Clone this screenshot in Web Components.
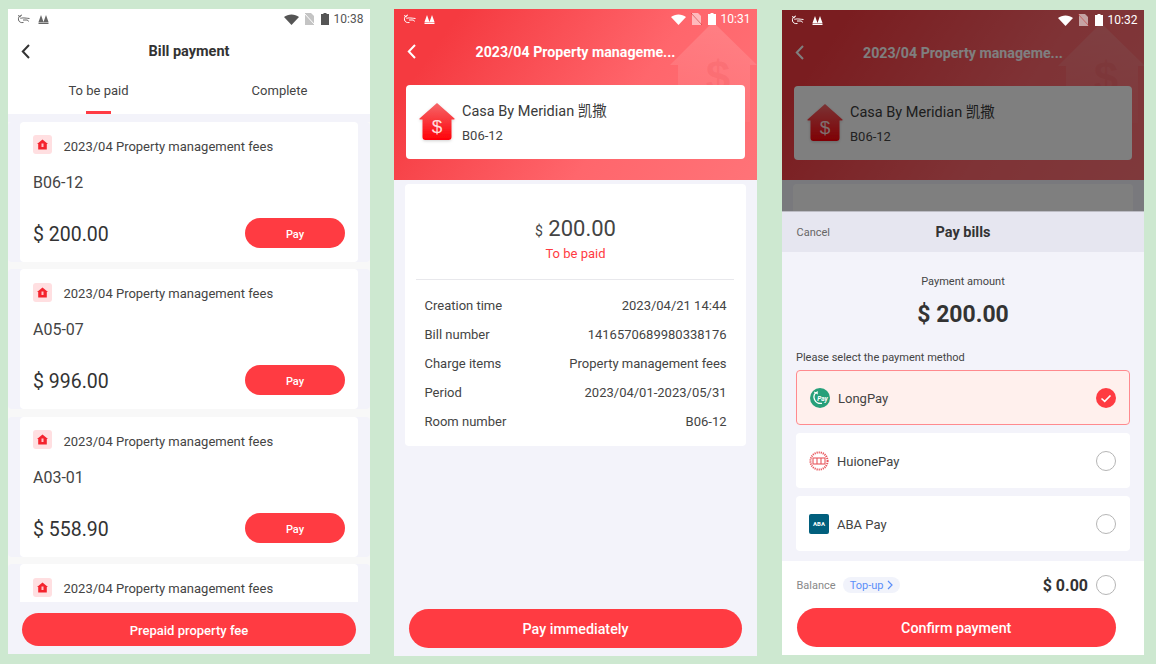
<!DOCTYPE html>
<html lang="en"><head><meta charset="utf-8"><title>Bill payment</title>
<style>
html,body{margin:0;padding:0;background:#cde8d0;height:664px;overflow:hidden}
body{font-family:Roboto,"Noto Sans CJK SC",sans-serif;color:#333}
#screens{display:flex;align-items:flex-start;padding-left:8px}
</style></head><body>
<div id="screens">
<x-phone style="--top:9px;--w:362px;--h:645px;--ml:0px">
  <x-status time="10:38" tone="dark"></x-status>
  <x-nav label="Bill payment"></x-nav>
  <x-tabs></x-tabs>
  <x-bill-list>
    <x-bill room="B06-12" amount="$ 200.00"></x-bill>
    <x-bill room="A05-07" amount="$ 996.00"></x-bill>
    <x-bill room="A03-01" amount="$ 558.90"></x-bill>
    <x-bill></x-bill>
  </x-bill-list>
  <x-action h="33" top="11" side="14" size="13">Prepaid property fee</x-action>
</x-phone>
<x-phone style="--top:9px;--w:363px;--h:647px;--ml:24px">
  <x-hero time="10:31" style="--hh:171px"></x-hero>
  <x-details></x-details>
  <x-action h="39" top="0" side="15" size="14.300">Pay immediately</x-action>
</x-phone>
<x-phone style="--top:10px;--w:362px;--h:645px;--ml:25px">
  <x-hero time="10:32" style="--hh:170px"></x-hero>
  <x-details empty></x-details>
  <x-pay-sheet></x-pay-sheet>
</x-phone>
</div>
<script>
const def=(name,html,init)=>{customElements.define(name,class extends HTMLElement{
  connectedCallback(){ if(this.shadowRoot) return; const s=this.attachShadow({mode:'open'}); s.innerHTML=typeof html==='function'?html(this):html; if(init)init(this,s);} });};

def('x-phone',`<style>:host{display:flex;flex-direction:column;position:relative;flex:none;overflow:hidden;background:#f3f3fa;width:var(--w);height:var(--h);margin-top:var(--top);margin-left:var(--ml)}</style><slot></slot>`);

def('x-status',h=>{const dark=h.getAttribute('tone')==='dark';const c=dark?'#555':'#fff';const sim=dark?'#c4c4c4':'rgba(255,255,255,.55)';const logo=dark?'#666':'#fff';return `<style>
:host{display:flex;align-items:center;height:24px;flex:none;position:relative;z-index:2;padding:0 6.500px 4px 9px;box-sizing:border-box;color:${c};font-size:12px;background:${dark?'#fff':'transparent'}}
.l{display:flex;gap:8px;align-items:center;margin-right:auto}.r{display:flex;align-items:center}
svg{display:block}</style>
<div class="l">
<svg width="13" height="10" viewBox="0 0 13 10" fill="none" stroke="${logo}" stroke-width="1"><path d="M5 1C2.500 1.500 1 3.500 1.500 6 2 8 4 9 6.500 8.500"/><path d="M1 1.500 4 3M3.500 4.500C5.500 3.500 7.500 4 12.500 4.500M6 6h4.500l1 1.500"/></svg>
<svg width="11" height="9" viewBox="0 0 11 9" fill="${logo}"><path d="M3 0 5.500 7H0.500zM8 0l2.500 7h-5zM.5 7.500h10V9H.5z"/></svg>
</div>
<div class="r">
<svg width="15" height="11" viewBox="0 0 15 11" fill="${c}" style="margin-right:5px"><path d="M0 3C4-.5 11-.5 15 3L7.500 11z"/></svg>
<svg width="11" height="12" viewBox="0 0 11 12" fill="${sim}" style="margin-right:6px"><path d="M1 0h6l3 3v9H1z"/><path d="M0 0 11 12" stroke="${dark?'#fff':'rgba(200,60,60,.6)'}" stroke-width="1"/></svg>
<svg width="8" height="12" viewBox="0 0 8 12" fill="${c}" style="margin-right:5px"><path d="M2.500 0h3v1H8v11H0V1h2.500z"/></svg>
<span>${h.getAttribute('time')}</span></div>`});

const chev=c=>`<svg width="10" height="15" viewBox="0 0 10 15" fill="none" stroke="${c}" stroke-width="2"><path d="M8 1 1.800 7.500 8 14"/></svg>`;

def('x-nav',h=>{const light=h.hasAttribute('light');return `<style>
:host{display:grid;grid-template-columns:60px 1fr 60px;align-items:center;height:36px;flex:none;background:${light?'transparent':'#fff'}}
.b{padding-left:12.500px;display:flex}
.t{text-align:center;font-weight:700;font-size:${light?'14.200px':'14.500px'};color:${light?'#fff':'#333'};white-space:nowrap;padding-top:1px}
</style><div class="b">${chev(light?'#fff':'#333')}</div><div class="t">${h.getAttribute('label')}</div><div></div>`});

def('x-tabs',`<style>
:host{display:grid;grid-template-columns:1fr 1fr;height:45px;flex:none;background:#fff;font-size:13px;color:#444}
div{text-align:center;line-height:44px;position:relative}
i{position:absolute;left:50%;bottom:0;width:25px;height:3px;margin-left:-12.500px;background:#ff3b44}
</style><div>To be paid<i></i></div><div>Complete</div>`);

def('x-bill-list',`<style>:host{display:block;flex:1;min-height:0;overflow:hidden;padding-top:7.800px}</style><slot></slot>`);

def('x-home',`<style>:host{display:flex;align-items:center;justify-content:center;width:19px;height:19px;background:#ffdfe1;border-radius:3px;flex:none}</style>
<svg width="11" height="11" viewBox="0 0 11 11"><path d="M5.500.500 11 5H9.800v5.500H1.200V5H0z" fill="#f4232d"/><rect x="4.500" y="4.500" width="2" height="3.500" fill="#ffc4c8"/></svg>`);

def('x-bill',h=>{const partial=!h.hasAttribute('amount');return `<style>
:host{display:block;padding-bottom:7.500px;background:#f8f8f8;margin:0}
.c{box-sizing:border-box;height:140px;background:#fff;border-radius:4px;padding:13px 13px 14px;display:flex;flex-direction:column;box-shadow:-12px 0 0 #f3f3fa,12px 0 0 #f3f3fa;margin:0 12px}
.a{display:flex;align-items:center;gap:11.500px;height:20px;font-size:13px;color:#444}
.a span{padding-top:3px}
.r{margin-top:18px;height:20px;line-height:20px;font-size:16px;color:#444}
.b{margin-top:auto;display:flex;align-items:center;justify-content:space-between}
.m{font-size:19.500px;color:#333;padding-top:3px}
.p{width:100px;height:30px;line-height:33px;border-radius:15px;background:#ff3b42;color:#fff;text-align:center;font-size:11px;font-weight:500}
</style><div class="c"><div class="a"><x-home></x-home><span>2023/04 Property management fees</span></div>
${partial?'':`<div class="r">${h.getAttribute('room')}</div>
<div class="b"><span class="m">${h.getAttribute('amount')}</span><span class="p">Pay</span></div>`}</div>`});

def('x-action',h=>{const H=+h.getAttribute('h');return `<style>
:host{display:block;flex:none;padding:${h.getAttribute('top')}px ${h.getAttribute('side')}px 8px}
div{height:${H}px;line-height:${H+2}px;border-radius:${H/2}px;background:#ff3b42;color:#fff;text-align:center;font-weight:500;font-size:${h.getAttribute('size')}px}
</style><div><slot></slot></div>`});

def('x-house',`<style>:host{display:block;width:38px;height:40px;flex:none}svg{display:block;overflow:visible}</style>
<svg width="38" height="40" viewBox="0 0 38 40"><defs><linearGradient id="g" x1="0" y1="0" x2="0" y2="1"><stop offset="0" stop-color="#f5686a"/><stop offset="1" stop-color="#ff0008"/></linearGradient><filter id="s" x="-20%" y="-20%" width="140%" height="140%"><feDropShadow dx="0" dy="1" stdDeviation="1.500" flood-color="#000" flood-opacity=".18"/></filter></defs>
<path filter="url(#s)" d="M19 1 36.500 16.500q.5 1-.5 1H33.500V35q0 3-3 3H7.500q-3 0-3-3V17.500H2q-1 0-.5-1z" fill="url(#g)"/>
<text x="19" y="31" text-anchor="middle" font-family="Liberation Sans,sans-serif" font-size="19" fill="#fdd">$</text></svg>`);

def('x-hero',h=>`<style>
:host{display:block;position:relative;flex:none;overflow:hidden;height:var(--hh);background:linear-gradient(125deg,#f53a40 14%,#ff666c 62%,#ff7378 100%)}
.w{position:absolute;left:276px;top:13px}
.c{position:relative;box-sizing:border-box;height:74px;margin:16px 12px 0;background:#fff;border-radius:4px;display:flex;align-items:center;padding-left:12px;gap:6px}
.tx{padding-top:4px}
.n{font-size:14.500px;color:#3a3a3a;line-height:20px;margin-bottom:4.500px}.o{font-size:13px;color:#444;line-height:20px}
</style>
<svg class="w" width="90" height="100" viewBox="0 0 90 100"><defs><linearGradient id="wg" x1="0" y1="0" x2="0" y2="1"><stop offset="0" stop-color="#fff" stop-opacity=".15"/><stop offset="1" stop-color="#fff" stop-opacity=".03"/></linearGradient></defs><path d="M43 0 87 43H80V100H8V43H0z" fill="url(#wg)"/><text x="48" y="70" text-anchor="middle" font-family="Liberation Sans,sans-serif" font-weight="700" font-size="44" fill="#e5333b" fill-opacity=".13">$</text></svg>
<x-status time="${h.getAttribute('time')}"></x-status>
<x-nav light label="2023/04 Property manageme..."></x-nav>
<div class="c"><x-house></x-house><div class="tx"><div class="n">Casa By Meridian 凯撒</div><div class="o">B06-12</div></div></div>`);

def('x-row',h=>`<style>:host{display:flex;justify-content:space-between;height:29px;line-height:29px;font-size:13px;color:#444}</style><span>${h.getAttribute('k')}</span><span>${h.getAttribute('v')}</span>`);

def('x-details',h=>`<style>
:host{display:block;flex:1;min-height:0;padding:3.500px 11px 0}
.c{background:#fff;border-radius:4px;padding:31px 0 10px;height:262px;box-sizing:border-box}
.a{text-align:center;height:28px;line-height:28px;font-size:22px;color:#444}.a small{font-size:14px}
.s{text-align:center;color:#ff3b42;font-size:13px;height:18px;line-height:18px;margin-top:2px}
hr{border:0;border-top:1px solid #e8e8ec;margin:16px 12px 11px 11px}
.rows{padding:0 19.500px}
</style><div class="c">${h.hasAttribute('empty')?'':`<div class="a"><small>$</small> 200.00</div><div class="s">To be paid</div><hr>
<div class="rows"><x-row k="Creation time" v="2023/04/21 14:44"></x-row><x-row k="Bill number" v="1416570689980338176"></x-row><x-row k="Charge items" v="Property management fees"></x-row><x-row k="Period" v="2023/04/01-2023/05/31"></x-row><x-row k="Room number" v="B06-12"></x-row></div>`}</div>`);

def('x-radio',h=>{const on=h.hasAttribute('on');return `<style>:host{display:block;width:20px;height:20px;flex:none}svg{display:block}</style>
<svg width="20" height="20" viewBox="0 0 20 20">${on?'<circle cx="10" cy="10" r="10" fill="#ff3b42"/><path d="M5.500 10.500 8.700 13.300 14.500 7.500" fill="none" stroke="#fff" stroke-width="1.600"/>':'<circle cx="10" cy="10" r="9.500" fill="#fff" stroke="#b5b5b5"/>'}</svg>`});

const logos={
long:`<svg width="20" height="20" viewBox="0 0 20 20"><circle cx="10" cy="10" r="10" fill="#27a07a"/><path d="M8 3.800C4.500 4.500 3 8 4.500 11.500 5.500 14 8.500 16 12 15.300" fill="none" stroke="#fff" stroke-width="1.300"/><path d="M4 4 8 6" stroke="#fff"/><text x="12.500" y="12.500" text-anchor="middle" font-family="Roboto,sans-serif" font-style="italic" font-weight="700" font-size="6.500" fill="#fff">Pay</text></svg>`,
huione:`<svg width="20" height="20" viewBox="0 0 20 20" fill="none" stroke="#e8565c"><circle cx="10" cy="10" r="8.600" stroke-width="2" stroke-dasharray="1.200 .9"/><rect x="4" y="7" width="12" height="6" fill="#fff" stroke-width="1.100"/><path d="M8 7v6M12 7v6" stroke-width="1.100"/></svg>`,
aba:`<svg width="20" height="20" viewBox="0 0 20 20"><rect width="20" height="20" rx="2" fill="#015f7d"/><text x="10" y="12.200" text-anchor="middle" font-family="Roboto,sans-serif" font-weight="700" font-size="6" fill="#fff">ABA</text></svg>`};

def('x-method',h=>{const on=h.hasAttribute('on');const sh=h.getAttribute('logo')!=='long';return `<style>
:host{display:flex;align-items:center;box-sizing:border-box;height:55px;border-radius:4px;padding:0 14px;background:${on?'#fff0ed':'#fff'};font-size:13px;color:#444;${on?'border:1px solid #ff8a8e;padding:0 13px;':''}}
svg{display:block}.i{flex:none;margin-right:8px;${sh?'margin-left:-1px;':''}}.t{flex:1;padding-top:1px}
</style><div class="i">${logos[h.getAttribute('logo')]}</div><div class="t">${h.getAttribute('label')}</div><x-radio ${on?'on':''}></x-radio>`});

def('x-pay-sheet',`<style>
:host{position:absolute;left:0;top:0;right:0;bottom:0;z-index:1;display:flex;flex-direction:column;background:rgba(0,0,0,.5)}
.gap{height:201px;flex:none}
.h{height:41px;flex:none;background:#e6e6f0;display:grid;grid-template-columns:1fr auto 1fr;align-items:center;padding:0 14.500px;border-top:1px solid #bcbcc4;box-sizing:border-box}
.h span{font-size:11px;color:#666}.h b{font-size:14.500px;color:#333;font-weight:700}
.b{background:#f3f3fa;height:309px;flex:none;box-sizing:border-box;padding:21px 14px 0}
.p{text-align:center;font-size:11px;color:#444;line-height:18px}
.m{text-align:center;font-size:23px;font-weight:700;color:#333;line-height:30px;margin-top:9px}
.l{font-size:11px;color:#444;line-height:16px;margin-top:20px}
.o{display:flex;flex-direction:column;gap:8px;margin-top:4px}
.f{background:#fff;flex:1}
.br{height:47px;display:flex;align-items:center;padding:0 28px 0 14.500px}
.bl{font-size:11px;color:#888;padding-top:1px}
.chip{margin-left:7px;height:16px;width:57px;box-sizing:border-box;border-radius:8px;background:#f1f3fb;color:#5b8ff9;font-size:11px;display:flex;align-items:center;justify-content:center;gap:3px;padding-top:1px}
.v{margin-left:auto;font-size:16px;font-weight:700;color:#333;margin-right:8px;padding-top:1px}
</style>
<div class="gap"></div>
<div class="h"><span>Cancel</span><b>Pay bills</b><i></i></div>
<div class="b"><div class="p">Payment amount</div><div class="m">$ 200.00</div><div class="l">Please select the payment method</div>
<div class="o"><x-method on logo="long" label="LongPay"></x-method><x-method logo="huione" label="HuionePay"></x-method><x-method logo="aba" label="ABA Pay"></x-method></div></div>
<div class="f"><div class="br"><span class="bl">Balance</span><span class="chip">Top-up<svg width="6" height="10" viewBox="0 0 6 10" fill="none" stroke="#5b8ff9" stroke-width="1.200"><path d="M1 1l4 4-4 4"/></svg></span><span class="v">$ 0.00</span><x-radio></x-radio></div>
<x-action h="39" top="0" side="28" size="14.300" style="padding-left:14.500px">Confirm payment</x-action></div>`);
</script>
</body></html>
